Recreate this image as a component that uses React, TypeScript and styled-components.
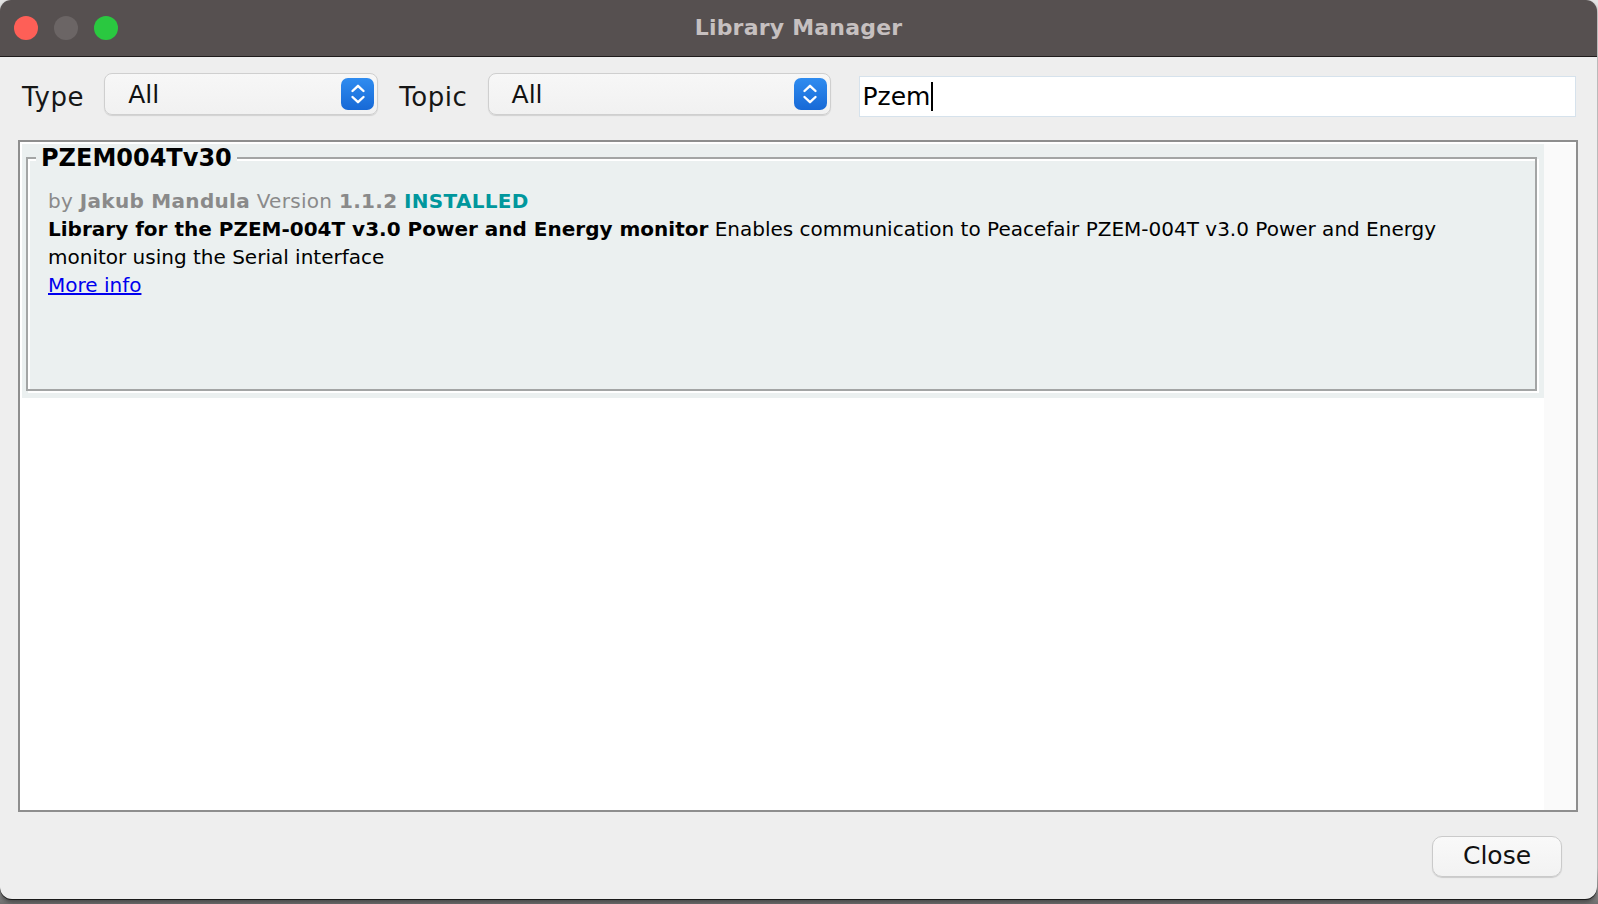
import React from 'react';
import styled, { createGlobalStyle } from 'styled-components';

const GlobalStyle = createGlobalStyle`
  html, body {
    margin: 0;
    padding: 0;
    background: linear-gradient(to bottom, #e4e4e4 0%, #e4e4e4 96%, #6e6e6e 100%);
    width: 1598px;
    height: 904px;
    overflow: hidden;
    font-family: "DejaVu Sans", Verdana, sans-serif;
  }
`;

const Window = styled.div`
  width: 1597px;
  height: 899px;
  border-radius: 11px 11px 12px 12px;
  overflow: hidden;
  background: #eeeeee;
  display: flex;
  flex-direction: column;
  box-shadow: 0 1px 0 #1a1a1a, 0 3px 4px rgba(0, 0, 0, 0.45);
`;

const TitleBar = styled.div`
  height: 56px;
  background: #565050;
  border-bottom: 1px solid #1f1c1c;
  display: grid;
  grid-template-columns: 1fr auto 1fr;
  align-items: center;
  flex-shrink: 0;
`;

const Lights = styled.div`
  display: flex;
  gap: 16px;
  padding-left: 14px;
`;

const Light = styled.span<{ $color: string }>`
  width: 24px;
  height: 24px;
  border-radius: 50%;
  background: ${p => p.$color};
`;

const Title = styled.div`
  font-family: "DejaVu Sans", sans-serif;
  font-weight: bold;
  font-size: 22px;
  color: #c6c0c0;
  letter-spacing: 0.2px;
  padding-bottom: 2px;
`;

const Toolbar = styled.div`
  display: flex;
  align-items: center;
  margin: 16px 21px 0 22px;
  height: 42px;
  flex-shrink: 0;
`;

const Label = styled.span`
  font-size: 26px;
  letter-spacing: 0.6px;
  color: #161616;
  padding-top: 6px;
  margin-right: 20px;
`;

const Combo = styled.div<{ $width: number }>`
  width: ${p => p.$width}px;
  height: 42px;
  box-sizing: border-box;
  border: 1px solid #cfcfcf;
  border-radius: 8px;
  background: linear-gradient(to bottom, #f7f7f7, #f1f1f1);
  box-shadow: 0 1px 1px rgba(0, 0, 0, 0.12);
  display: flex;
  align-items: center;
  justify-content: space-between;
  padding: 0 3px 0 23px;
  margin-right: 21px;
  flex-shrink: 0;
`;

const ComboText = styled.span`
  font-size: 25px;
  color: #111;
  padding-top: 1px;
`;

const Stepper = styled.div`
  width: 33px;
  height: 32px;
  border-radius: 7px;
  background: linear-gradient(to bottom, #2f8cf0, #1769d6);
  display: flex;
  align-items: center;
  justify-content: center;
`;

const Search = styled.div`
  flex: 1;
  height: 41px;
  margin-top: 5px;
  margin-left: 7px;
  box-sizing: border-box;
  background: #ffffff;
  border: 1px solid #d6e2ec;
  display: flex;
  align-items: center;
  padding-left: 3px;
  font-size: 25px;
  color: #000;
`;

const Caret = styled.span`
  display: inline-block;
  width: 2px;
  height: 29px;
  background: #000;
  margin-left: 1px;
`;

const List = styled.div`
  margin: 25px 19px 0 18px;
  height: 672px;
  box-sizing: border-box;
  border: 2px solid #8e8e8e;
  background: #ffffff;
  display: flex;
  flex-shrink: 0;
`;

const ListBody = styled.div`
  flex: 1;
  padding: 2px 0 0 2px;
`;

const Scroll = styled.div`
  width: 32px;
  margin-top: 2px;
  background: #fafafa;
`;

const Item = styled.div`
  height: 254px;
  box-sizing: border-box;
  background: #ebf0f0;
  padding: 0 7px 7px 4px;
`;

const Group = styled.fieldset`
  margin: 0;
  height: 100%;
  box-sizing: border-box;
  border: 2px solid #a3a5a5;
  box-shadow: inset 2px 2px 0 #ffffff, 2px 2px 0 #ffffff;
  padding: 0 8px 0 8px;
`;

const Legend = styled.legend`
  font-weight: bold;
  font-size: 24px;
  line-height: 28px;
  color: #000;
  padding: 0 5px;
  background: #ebf0f0;
`;

const Info = styled.div`
  padding: 15px 0 0 12px;
  font-size: 20px;
  line-height: 28px;
  color: #000;
  max-width: 1410px;
`;

const Meta = styled.div`
  color: #8a8a8a;
  letter-spacing: 0.3px;
`;

const Strong = styled.b`
  font-weight: bold;
`;

const Installed = styled.b`
  color: #00979d;
`;

const MoreLink = styled.a`
  color: #0000ee;
  text-decoration: underline;
`;

const Footer = styled.div`
  display: flex;
  justify-content: flex-end;
  margin: 24px 35px 0 0;
`;

const CloseButton = styled.button`
  width: 130px;
  height: 41px;
  border: 1px solid #cacaca;
  border-radius: 10px;
  background: linear-gradient(to bottom, #f9f9f9, #f2f2f2);
  box-shadow: 0 1px 1px rgba(0, 0, 0, 0.15);
  font-family: "DejaVu Sans", sans-serif;
  font-size: 25px;
  color: #111;
  padding: 0 0 2px;
`;

const Chevrons = () => (
  <svg width="20" height="24" viewBox="0 0 20 24">
    <path d="M4.5 9 L10 3.8 L15.5 9" fill="none" stroke="#fff" strokeWidth="2.4" strokeLinecap="round" strokeLinejoin="round" />
    <path d="M4.5 15 L10 20.2 L15.5 15" fill="none" stroke="#fff" strokeWidth="2.4" strokeLinecap="round" strokeLinejoin="round" />
  </svg>
);

export default function App() {
  return (
    <>
      <GlobalStyle />
      <Window>
        <TitleBar>
          <Lights>
            <Light $color="#fe5f57" />
            <Light $color="#6b6565" />
            <Light $color="#2ac840" />
          </Lights>
          <Title>Library Manager</Title>
          <div />
        </TitleBar>

        <Toolbar>
          <Label>Type</Label>
          <Combo $width={274}>
            <ComboText>All</ComboText>
            <Stepper><Chevrons /></Stepper>
          </Combo>
          <Label>Topic</Label>
          <Combo $width={343}>
            <ComboText>All</ComboText>
            <Stepper><Chevrons /></Stepper>
          </Combo>
          <Search>
            Pzem<Caret />
          </Search>
        </Toolbar>

        <List>
          <ListBody>
            <Item>
              <Group>
                <Legend>PZEM004Tv30</Legend>
                <Info>
                  <Meta>
                    by <Strong>Jakub Mandula</Strong> Version <Strong>1.1.2</Strong> <Installed>INSTALLED</Installed>
                  </Meta>
                  <div>
                    <Strong>Library for the PZEM-004T v3.0 Power and Energy monitor</Strong> Enables communication to Peacefair PZEM-004T v3.0 Power and Energy monitor using the Serial interface
                  </div>
                  <MoreLink href="#">More info</MoreLink>
                </Info>
              </Group>
            </Item>
          </ListBody>
          <Scroll />
        </List>

        <Footer>
          <CloseButton>Close</CloseButton>
        </Footer>
      </Window>
    </>
  );
}
